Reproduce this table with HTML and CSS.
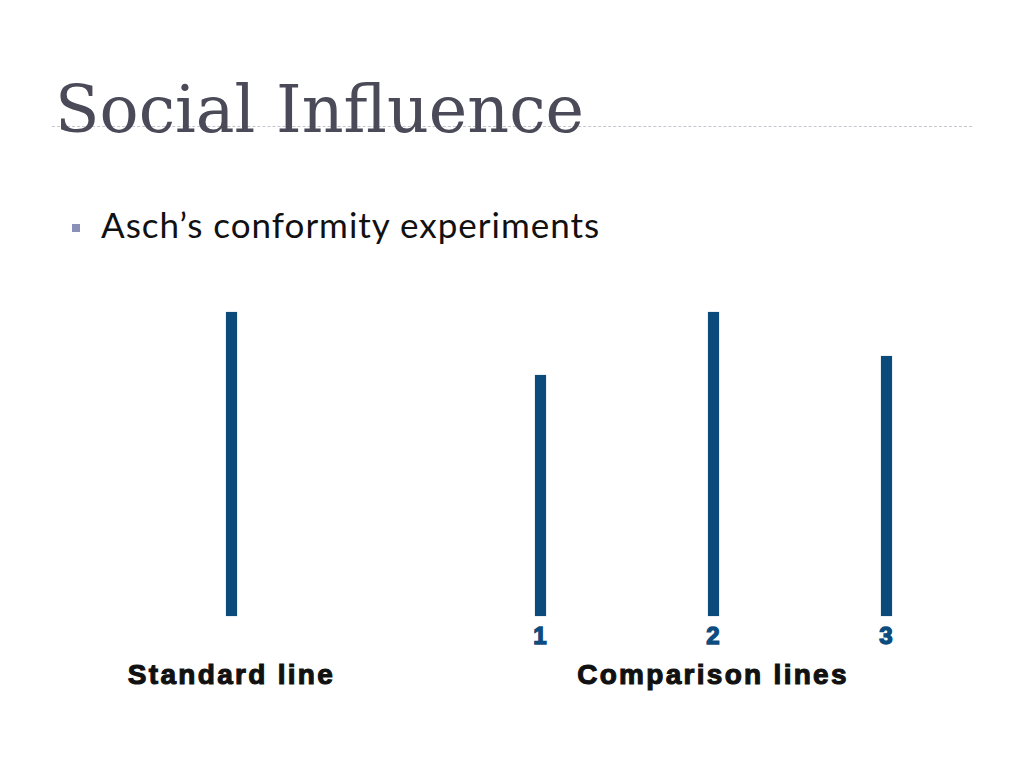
FILE: index.html
```html
<!DOCTYPE html>
<html lang="en">
<head>
<meta charset="utf-8">
<title>Social Influence</title>
<link rel="stylesheet" href="styles.css">
</head>
<body>
<div class="slide">
  <h1 class="title">Social Influence</h1>
  <ul class="bullets">
    <li class="bullet"><span class="marker"></span><span class="bullet-text">Asch’s conformity experiments</span></li>
  </ul>
  <div class="figure">
    <div class="bar-cell col-standard"><div class="bar" style="height:304px"></div></div>
    <div class="bar-cell col-1"><div class="bar" style="height:241px"></div></div>
    <div class="bar-cell col-2"><div class="bar" style="height:304px"></div></div>
    <div class="bar-cell col-3"><div class="bar" style="height:260px"></div></div>
    <div class="num col-1">1</div>
    <div class="num col-2">2</div>
    <div class="num col-3">3</div>
    <div class="label label-standard">Standard line</div>
    <div class="label label-comparison">Comparison lines</div>
  </div>
</div>
</body>
</html>
```

FILE: styles.css
```css
html, body {
  margin: 0;
  padding: 0;
  background: #ffffff;
}

.slide {
  width: 1024px;
  height: 768px;
  overflow: hidden;
  background: #ffffff;
  display: flex;
  flex-direction: column;
}

.title {
  margin: 93px 0 0 52px;
  width: 920px;
  height: 34px;
  padding-left: 3px;
  box-sizing: border-box;
  font-family: "DejaVu Serif", "Liberation Serif", serif;
  font-weight: normal;
  font-size: 65px;
  line-height: 34px;
  color: #4a4a58;
  border-bottom: 1px dashed #c6c6cf;
  white-space: nowrap;
}

.bullets {
  list-style: none;
  margin: 77px 0 0 0;
  padding: 0;
}

.bullet {
  display: flex;
  align-items: flex-start;
  height: 41px;
}

.marker {
  width: 8px;
  height: 8px;
  background: #8a90b8;
  margin: 20px 0 0 72px;
  flex: none;
}

.bullet-text {
  margin-left: 21px;
  font-family: "Lato", "Open Sans", sans-serif;
  font-size: 35px;
  line-height: 41px;
  letter-spacing: 1px;
  color: #111111;
}

.figure {
  margin-top: 67px;
  padding-left: 66px;
  display: grid;
  grid-template-columns: 331px 60px 60px 60px;
  grid-template-rows: 304px auto auto;
  column-gap: 113px;
}

.bar-cell {
  grid-row: 1;
  display: flex;
  justify-content: center;
  align-items: flex-end;
}

.col-standard { grid-column: 1; }
.col-1 { grid-column: 2; }
.col-2 { grid-column: 3; }
.col-3 { grid-column: 4; }

.bar {
  width: 11px;
  background: #0b4b7c;
  box-shadow: 0 0 1px rgba(11, 75, 124, 0.5);
}

.num {
  grid-row: 2;
  margin-top: 8px;
  text-align: center;
  font-family: "Liberation Sans", Arial, sans-serif;
  font-weight: bold;
  font-size: 24px;
  line-height: 24px;
  color: #0d4c7e;
  -webkit-text-stroke: 1.4px #0d4c7e;
}

.label {
  grid-row: 3;
  margin-top: 11px;
  text-align: center;
  font-family: "Liberation Sans", Arial, sans-serif;
  font-weight: bold;
  font-size: 28px;
  line-height: 32px;
  letter-spacing: 2.3px;
  color: #111111;
  -webkit-text-stroke: 1.1px #111111;
  white-space: nowrap;
}

.label-standard { grid-column: 1; }
.label-comparison { grid-column: 2 / 5; }
```
